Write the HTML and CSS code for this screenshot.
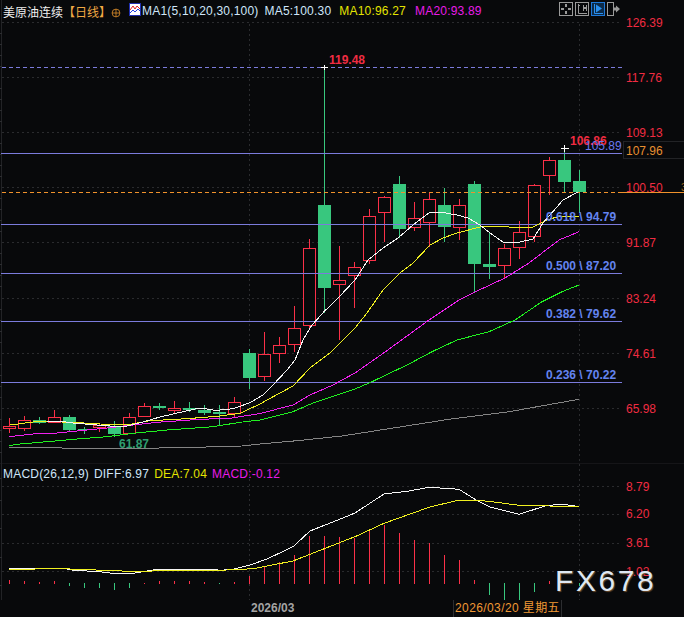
FILE: index.html
```html
<!DOCTYPE html>
<html lang="zh-CN">
<head>
<meta charset="utf-8">
<title>美原油连续 日线</title>
<link rel="stylesheet" href="styles.css">
</head>
<body>
<main class="terminal">
  <section class="panel price-panel">
    <svg class="plot" viewBox="0 0 684 464" width="684" height="464">
      <g class="grid">
        <path d="M2 22.5H622M2 77.5H622M2 132.5H622M2 187.5H622M2 242.5H622M2 298.5H622M2 353.5H622M2 408.5H622"/>
        <path d="M249.5 24V464M579.5 24V464"/>
      </g>
      <path class="frame" d="M1.5 0V464M0 464H684"/>
      <path class="ticks" d="M0 33.5H2M0 44.5H2M0 55.5H2M0 66.5H2M0 88.5H2M0 99.5H2M0 110.5H2M0 121.5H2M0 143.5H2M0 154.5H2M0 165.5H2M0 176.5H2M0 198.5H2M0 209.5H2M0 220.5H2M0 231.5H2M0 253.5H2M0 264.5H2M0 275.5H2M0 286.5H2M0 309.5H2M0 320.5H2M0 331.5H2M0 342.5H2M0 364.5H2M0 375.5H2M0 386.5H2M0 397.5H2M0 419.5H2M0 430.5H2M0 441.5H2M0 452.5H2"/>

      <g class="wicks up">
        <path d="M9.5 418V433M24.5 416V431M54.5 410V423M99.5 423V432M129.5 413V434M144.5 403V417M174.5 401V413M234.5 397V417M264.5 332V381M279.5 337V363M294.5 306V352M309.5 239V330M339.5 246V340M354.5 262V308M369.5 209V264M384.5 196V242M414.5 202V231M429.5 193V247M459.5 199V240M504.5 244V278M519.5 221V259M534.5 184V242M549.5 157V195"/>
      </g>
      <g class="wicks down">
        <path d="M39.5 417V424M69.5 415V431M84.5 427V434M114.5 421V437M159.5 403V410M189.5 402V412M204.5 405V415M219.5 405V425M249.5 349V389M324.5 67V313M399.5 176V238M444.5 188V242M474.5 181V292M489.5 233V279M564.5 148V193M579.5 170V213"/>
      </g>
      <g class="bodies up">
        <rect x="3.5" y="426.5" width="12" height="2"/>
        <rect x="18.5" y="420.5" width="12" height="8"/>
        <rect x="48.5" y="417.5" width="12" height="5"/>
        <rect x="93.5" y="425.5" width="12" height="2"/>
        <rect x="123.5" y="417.5" width="12" height="16"/>
        <rect x="138.5" y="406.5" width="12" height="10"/>
        <rect x="168.5" y="408.5" width="12" height="2"/>
        <rect x="228.5" y="402.5" width="12" height="11"/>
        <rect x="258.5" y="354.5" width="12" height="22"/>
        <rect x="273.5" y="345.5" width="12" height="8"/>
        <rect x="288.5" y="328.5" width="12" height="16"/>
        <rect x="303.5" y="248.5" width="12" height="77"/>
        <rect x="333.5" y="280.5" width="12" height="4"/>
        <rect x="348.5" y="267.5" width="12" height="8"/>
        <rect x="363.5" y="216.5" width="12" height="44"/>
        <rect x="378.5" y="197.5" width="12" height="15"/>
        <rect x="408.5" y="218.5" width="12" height="9"/>
        <rect x="423.5" y="199.5" width="12" height="23"/>
        <rect x="453.5" y="205.5" width="12" height="22"/>
        <rect x="498.5" y="248.5" width="12" height="17"/>
        <rect x="513.5" y="232.5" width="12" height="15"/>
        <rect x="528.5" y="185.5" width="12" height="51"/>
        <rect x="543.5" y="160.5" width="12" height="15"/>
      </g>
      <g class="bodies down">
        <rect x="33" y="420" width="13" height="3"/>
        <rect x="63" y="417" width="13" height="13"/>
        <rect x="78" y="429" width="13" height="1"/>
        <rect x="108" y="426" width="13" height="8"/>
        <rect x="153" y="406" width="13" height="2"/>
        <rect x="183" y="408" width="13" height="2"/>
        <rect x="198" y="410" width="13" height="3"/>
        <rect x="213" y="412" width="13" height="2"/>
        <rect x="243" y="353" width="13" height="25"/>
        <rect x="318" y="205" width="13" height="83"/>
        <rect x="393" y="184" width="13" height="45"/>
        <rect x="438" y="205" width="13" height="22"/>
        <rect x="468" y="184" width="13" height="80"/>
        <rect x="483" y="264" width="13" height="3"/>
        <rect x="558" y="160" width="13" height="22"/>
        <rect x="573" y="181" width="13" height="11"/>
      </g>

      <g class="levels">
        <path class="level-dash" d="M2 67.5H622"/>
        <path d="M1 153.5H622M1 224.5H622M1 273.5H622M1 321.5H622M1 382.5H622"/>
      </g>
      <path class="last-dash" d="M2 192.5H620"/>
      <path class="last-solid" d="M620 192.5H684"/>

      <g class="ma">
        <polyline class="ma100" points="9,448 47,447.7 77,448.3 137,448.3 182,447.7 242,446 260,444 297,440.7 342,436 449,419.3 509,411.7 579,399.3"/>
        <polyline class="ma30" points="9,445.7 20,444 47,441.7 77,439 107,436.7 133,433.3 167,430 213,426.7 240,422.3 260,420 293,411.7 313,403 342,393.3 355,389 372,381.7 409,364 432,351.7 457,340 489,331.7 515,320 542,301.7 562,291.7 579,285"/>
        <polyline class="ma20" points="9,436.7 33,434 57,433 80,430.7 107,428 133,425 157,422.3 200,419.3 230,418.3 260,413.5 293,405 310,395 333,385 342,380 355,373 385,352 429,320 459,300 475,292 505,278 529,263 559,240 579,231.7"/>
        <polyline class="ma10" points="10,425 33,422 50,421.7 73,422.3 100,424 130,424.3 150,420.7 177,419.3 200,417.7 220,416 240,413.3 260,404 267,400 293,386 310,368 330,353 355,328 367,313 383,290 400,273 413,263 430,245 443,238 457,233 480,227 500,226 517,228 533,227 547,220 560,216 579,216"/>
        <polyline class="ma5" points="47,421.5 62,421.5 73,423 97,425 110,426 127,426 143,422 160,417 183,411.7 200,408 213,410 220,410 233,408.7 250,402.7 263,395 273,385 287,370 295,360 303,340 312,325 324,311.7 339,297 355,280 368,260 383,248 398,238 413,225 430,212 440,212 457,215 468,218 480,225 490,233 503,242 520,242 533,239 543,223 563,200 578,192"/>
      </g>

      <path class="peak-mark" d="M321 67.5H328M324.5 65V70M561 148.5H569M564.5 145V152"/>

      <g class="axis">
        <text x="626" y="26.5">126.39</text>
        <text x="626" y="81.5">117.76</text>
        <text x="626" y="136.5">109.13</text>
        <text x="626" y="191.5">100.50</text>
        <text x="626" y="246.5">91.87</text>
        <text x="626" y="302.5">83.24</text>
        <text x="626" y="357.5">74.61</text>
        <text x="626" y="412.5">65.98</text>
      </g>
      <text class="clip-digit" x="681" y="191">3</text>
      <rect class="last-box" x="623.5" y="141.5" width="61" height="17"/>
      <text class="last-value" x="626" y="154.5">107.96</text>

      <text class="peak-label" x="329" y="64">119.48</text>
      <text class="peak-label" x="570" y="144.5">106.86</text>
      <text class="level-value" x="585" y="150">105.89</text>
      <text class="low-label" x="119" y="448">61.87</text>
      <g class="fib">
        <text x="546" y="221">0.618 \ 94.79</text>
        <text x="546" y="270">0.500 \ 87.20</text>
        <text x="546" y="318">0.382 \ 79.62</text>
        <text x="546" y="379">0.236 \ 70.22</text>
      </g>
    </svg>

    <header class="legend price-legend">
      <span class="symbol">美原油连续</span>
      <span class="period">【日线】</span>
      <svg class="globe" viewBox="0 0 10 10" width="10" height="10"><circle cx="5" cy="5" r="3.9"/><path d="M1 5H9M5 1V9"/></svg>
      <svg class="ma-icon" viewBox="0 0 12 13" width="12" height="13">
        <rect class="ma-icon-bg" x="0.5" y="0.5" width="11" height="12"/>
        <path class="ma-icon-red" d="M1 7L4 3L6 6L8 3L11 6"/>
        <path class="ma-icon-blue" d="M1 10L4 7L6 9L9 6L11 8"/>
      </svg>
      <span class="ma-name">MA1(5,10,20,30,100)</span>
      <span class="white">MA5:100.30</span>
      <span class="yellow">MA10:96.27</span>
      <span class="magenta">MA20:93.89</span>
    </header>

    <nav class="toolbar">
      <svg class="tool" viewBox="0 0 14 14" width="14" height="14"><rect class="tool-box" x="0.5" y="0.5" width="13" height="13"/><path class="tool-ink" d="M6 2H8V5H6ZM6 9H8V12H6ZM2 6H5V8H2ZM9 6H12V8H9Z"/></svg>
      <svg class="tool" viewBox="0 0 14 14" width="14" height="14"><rect class="tool-box" x="0.5" y="0.5" width="13" height="13"/><path class="tool-line" d="M3.5 2V11.5H12M3 3.5H5M8.5 3V9M11.5 3V9"/><path class="tool-ink" d="M8 5H11V7H8Z"/></svg>
      <svg class="tool tool-on" viewBox="0 0 14 14" width="14" height="14"><rect class="tool-box" x="0.5" y="0.5" width="13" height="13"/><path class="tool-line" d="M3.5 2V11.5H12"/><path class="tool-ink" d="M5 2.5L11 6.5L5 10.5Z"/></svg>
      <svg class="tool" viewBox="0 0 14 14" width="14" height="14"><rect class="tool-box" x="0.5" y="0.5" width="6" height="13"/><path class="tool-ink" d="M7 5.5H9V3.5L13 7L9 10.5V8.500H7Z"/></svg>
    </nav>
  </section>

  <section class="panel macd-panel">
    <svg class="plot" viewBox="0 464 684 136" width="684" height="136">
      <g class="grid">
        <path d="M2 486.500H622M2 514.500H622M2 543.500H622M2 571.500H622"/>
        <path d="M249.500 464V600M579.500 464V600"/>
      </g>
      <path class="frame" d="M1.500 464V600M0 600.500H684"/>
      <path class="ticks" d="M0 478.500H2M0 500.500H2M0 528.500H2M0 557.500H2M0 585.500H2"/>
      <g class="hist-up">
        <path d="M9.500 580V584M24.500 581V584M39.500 582V584M54.500 581V584M144.500 583V584M159.500 581V584M174.500 581V584M189.500 581V584M204.500 582V584M234.500 582V584M249.500 576V584M264.500 567V584M279.500 562V584M294.500 555V584M309.500 536V584M324.500 536V584M339.500 537V584M354.500 538V584M369.500 530V584M384.500 525V584M399.500 533V584M414.500 540V584M429.500 543V584M444.500 555V584M459.500 560V584M474.500 580V584M549.500 581V584M564.500 582V584"/>
      </g>
      <g class="hist-down">
        <path d="M69.500 583V586M84.500 583V588M99.500 583V588M114.500 583V590M129.500 583V588M219.500 583V584M489.500 583V595M504.500 583V600M519.500 583V600M534.500 583V592M579.500 583V586"/>
      </g>
      <g class="ma">
        <polyline class="diff" points="9,568 62,568 73,570.300 100,571.700 112,573.300 133,573.300 147,571 157,569.300 212,569.300 220,570.300 233,569.300 250,565 267,559 293,546.700 310,531 342,518.300 355,513 384,494 409,491 429,487.300 459,489.300 475,499.300 489,506.700 519,514.300 545,506 562,504 579,506.700"/>
        <polyline class="dea" points="9,569.300 62,568.700 122,571 152,571 227,570 253,568.700 293,561 310,554.300 342,541.700 355,536.700 384,523.300 429,507.300 459,500 475,500 492,501.700 519,505.300 549,506 579,506.700"/>
      </g>
      <g class="axis">
        <text x="626" y="490.500">8.79</text>
        <text x="626" y="518">6.20</text>
        <text x="626" y="547">3.61</text>
        <text x="626" y="575.500">1.02</text>
      </g>
    </svg>
    <header class="legend macd-legend">
      <span class="ma-name">MACD(26,12,9)</span>
      <span class="white">DIFF:6.97</span>
      <span class="yellow">DEA:7.04</span>
      <span class="magenta">MACD:-0.12</span>
    </header>
    <div class="watermark">FX678</div>
  </section>

  <footer class="date-axis">
    <span class="tick-date">2026/03</span>
    <span class="cursor-date">2026/03/20 星期五</span>
  </footer>
</main>
</body>
</html>
```
FILE: styles.css
```css
html, body {
  margin: 0;
  padding: 0;
  background: #08090b;
}

.terminal {
  display: flex;
  flex-direction: column;
  width: 684px;
  height: 617px;
  overflow: hidden;
  background: #08090b;
  font-family: "Liberation Sans", "Noto Sans CJK SC", sans-serif;
  font-size: 12px;
}

.panel {
  position: relative;
  flex: none;
}
.price-panel { height: 464px; }
.macd-panel { height: 136px; }

.plot {
  display: block;
}

/* chart structure */
.grid path {
  fill: none;
  stroke: #2a2b2e;
  stroke-width: 1;
  stroke-dasharray: 2 3;
}
.frame {
  fill: none;
  stroke: #222326;
}
.ticks {
  fill: none;
  stroke: #2c2d30;
}

.wicks path,
.hist-up path,
.hist-down path {
  fill: none;
  stroke-width: 1;
  shape-rendering: crispEdges;
}
.wicks.up path, .hist-up path { stroke: #fb3048; }
.wicks.down path, .hist-down path { stroke: #38c77e; }

.bodies { shape-rendering: crispEdges; }
.bodies.up rect {
  fill: #08090b;
  stroke: #fb3048;
  stroke-width: 1;
}
.bodies.down rect { fill: #38c77e; }

.levels path {
  fill: none;
  stroke: #7b7bdc;
  stroke-width: 1;
  shape-rendering: crispEdges;
}
.levels .level-dash { stroke-dasharray: 4 3; }
.last-dash {
  fill: none;
  stroke: #f0922c;
  stroke-dasharray: 4 3;
  shape-rendering: crispEdges;
}
.last-solid {
  fill: none;
  stroke: #f0922c;
  shape-rendering: crispEdges;
}

.ma polyline {
  fill: none;
  stroke-width: 1;
  stroke-linejoin: round;
  shape-rendering: crispEdges;
}
.ma5, .diff { stroke: #f6f6f6; }
.ma10, .dea { stroke: #f0f020; }
.ma20 { stroke: #f020f0; }
.ma30 { stroke: #20f020; }
.ma100 { stroke: #848484; }

.peak-mark {
  fill: none;
  stroke: #ffffff;
  shape-rendering: crispEdges;
}

/* chart text */
.axis text {
  fill: #f02c42;
  font-size: 12px;
}
.peak-label {
  fill: #f02c42;
  font-size: 12px;
  font-weight: 700;
}
.level-value {
  fill: #6a78f0;
  font-size: 12px;
}
.low-label {
  fill: #2f9f70;
  font-size: 12px;
  font-weight: 700;
}
.fib text {
  fill: #6484f0;
  font-size: 12px;
  font-weight: 700;
}
.last-box {
  fill: #08090b;
  stroke: #222326;
}
.last-value {
  fill: #e89030;
  font-size: 12px;
}
.clip-digit {
  fill: #a06a20;
  font-size: 10px;
}

/* legends */
.legend {
  position: absolute;
  left: 3px;
  display: flex;
  align-items: center;
  height: 16px;
  white-space: nowrap;
  font-size: 12px;
  letter-spacing: 0.2px;
}
.price-legend { top: 3px; }
.macd-legend { top: 2px; gap: 5px; }
.symbol { color: #eeeeee; letter-spacing: 0; }
.period { color: #f0a844; letter-spacing: 0; width: 48px; }
.globe {
  margin-top: 3px;
}
.globe circle, .globe path {
  fill: none;
  stroke: #e0902c;
  stroke-width: 0.8;
}
.ma-icon { margin-left: 8px; margin-top: -3px; }
.ma-icon-bg { fill: #ffffff; stroke: #2030b0; }
.ma-icon-red { fill: none; stroke: #e02020; stroke-width: 1; }
.ma-icon-blue { fill: none; stroke: #2040e0; stroke-width: 1; }
.ma-name { color: #cfe6fa; margin-left: 1px; }
.white { color: #cfe6fa; }
.yellow { color: #e4e400; }
.magenta { color: #e81ce8; }
.price-legend .white { margin-left: 6px; }
.price-legend .yellow { margin-left: 8px; }
.price-legend .magenta { margin-left: 9px; }
.macd-legend .ma-name { margin-left: 0; }

/* toolbar */
.toolbar {
  position: absolute;
  top: 2px;
  left: 559px;
  display: flex;
  gap: 2px;
}
.tool { display: block; }
.tool-box { fill: none; stroke: #9a9a9a; }
.tool-ink { fill: #9a9a9a; }
.tool-line { fill: none; stroke: #9a9a9a; }
.tool-on .tool-box { stroke: #1e78d8; fill: #0c2a48; }
.tool-on .tool-ink { fill: #2a90f0; }
.tool-on .tool-line { stroke: #2a90f0; }

/* watermark */
.watermark {
  position: absolute;
  left: 555px;
  top: 100px;
  color: #dfe8f2;
  font-size: 30px;
  line-height: 34px;
  letter-spacing: 2.6px;
  text-shadow: 1px 1px 1px #6b4a2a;
}

/* date axis */
.date-axis {
  position: relative;
  flex: none;
  height: 17px;
}
.tick-date {
  position: absolute;
  left: 251px;
  top: 1px;
  color: #a4a4a4;
  font-weight: 700;
  line-height: 15px;
}
.cursor-date {
  position: absolute;
  left: 453px;
  top: 0;
  width: 109px;
  height: 17px;
  box-sizing: border-box;
  border-left: 1px solid #2c2d30;
  border-right: 1px solid #2c2d30;
  color: #f09834;
  line-height: 16px;
  letter-spacing: 0.4px;
  text-align: center;
  white-space: nowrap;
}
```
